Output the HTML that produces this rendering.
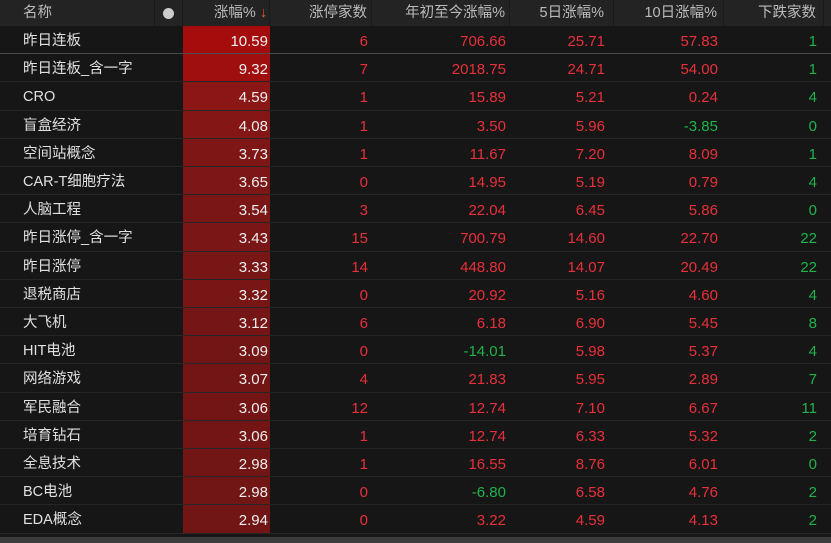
<!DOCTYPE html>
<html><head><meta charset="utf-8"><style>
body{margin:0;width:831px;height:543px;background:#161616;overflow:hidden;font-family:"Liberation Sans","Noto Sans CJK SC",sans-serif;font-size:14.5px;}
.hd{position:absolute;left:0;top:0;width:831px;height:26px;background:#232323;}
.hd div,.r div{position:absolute;top:0;height:100%;box-sizing:border-box;text-align:right;}
.hd div{color:#bbb;line-height:27px;border-right:1px solid #1a1a1a;}
.r{position:absolute;left:0;width:831px;height:28.2px;border-bottom:1px solid #262626;box-sizing:border-box;}
.r div{line-height:31px;color:#e8303a;font-size:15px}
.c0{left:0;width:155px;text-align:left!important;padding-left:23px;color:#e0e0e0!important;font-size:14.5px!important}
.c1{left:155px;width:28px}
.c2{left:183px;width:87px;color:#eee!important;padding-right:2px}
.c3{left:270px;width:102px;padding-right:4px}
.c4{left:372px;width:138px;padding-right:4px}
.c5{left:510px;width:104px;padding-right:9px}
.c6{left:614px;width:110px;padding-right:6px}
.c7{left:724px;width:100px;padding-right:7px}
.g{color:#1fb34b!important}
.sb{position:absolute;left:0;top:537px;width:831px;height:6px;background:#3c3c3c}
</style></head><body>
<div class="hd">
<div class="c0" style="color:#bbb!important">名称</div>
<div class="c1" style="text-align:center;padding:0"><span style="display:inline-block;width:11px;height:11px;border-radius:50%;background:#ccc;margin-top:8px;vertical-align:top"></span></div>
<div class="c2" style="color:#bbb!important">涨幅% <span style="color:#e85a2a">↓</span></div>
<div class="c3">涨停家数</div><div class="c4">年初至今涨幅%</div><div class="c5">5日涨幅%</div><div class="c6">10日涨幅%</div><div class="c7">下跌家数</div>
</div>
<div id="rows"></div>
<div class="sb"></div>
<script>
var d=[["昨日连板","10.59","6","706.66","25.71","57.83","1","#a50d0d"],
["昨日连板_含一字","9.32","7","2018.75","24.71","54.00","1","#a00f0f"],
["CRO","4.59","1","15.89","5.21","0.24","4","#8a1616"],
["盲盒经济","4.08","1","3.50","5.96","-3.85","0","#841616"],
["空间站概念","3.73","1","11.67","7.20","8.09","1","#7f1616"],
["CAR-T细胞疗法","3.65","0","14.95","5.19","0.79","4","#7d1616"],
["人脑工程","3.54","3","22.04","6.45","5.86","0","#7b1616"],
["昨日涨停_含一字","3.43","15","700.79","14.60","22.70","22","#7a1616"],
["昨日涨停","3.33","14","448.80","14.07","20.49","22","#781515"],
["退税商店","3.32","0","20.92","5.16","4.60","4","#781515"],
["大飞机","3.12","6","6.18","6.90","5.45","8","#751515"],
["HIT电池","3.09","0","-14.01","5.98","5.37","4","#741515"],
["网络游戏","3.07","4","21.83","5.95","2.89","7","#741515"],
["军民融合","3.06","12","12.74","7.10","6.67","11","#741515"],
["培育钻石","3.06","1","12.74","6.33","5.32","2","#741515"],
["全息技术","2.98","1","16.55","8.76","6.01","0","#721515"],
["BC电池","2.98","0","-6.80","6.58","4.76","2","#721515"],
["EDA概念","2.94","0","3.22","4.59","4.13","2","#711515"]];
var h="";
d.forEach(function(r,i){
function c(v){return v.charAt(0)=="-"?' g':'';}
h+='<div class="r" style="top:'+(26+i*28.2)+'px'+(i==0?';border-bottom-color:#4a4a4a':'')+'"><div class="c0">'+r[0]+'</div><div class="c2" style="background:'+r[7]+'">'+r[1]+'</div><div class="c3">'+r[2]+'</div><div class="c4'+c(r[3])+'">'+r[3]+'</div><div class="c5'+c(r[4])+'">'+r[4]+'</div><div class="c6'+c(r[5])+'">'+r[5]+'</div><div class="c7 g">'+r[6]+'</div></div>';
});
document.getElementById("rows").innerHTML=h;
</script>
</body></html>
